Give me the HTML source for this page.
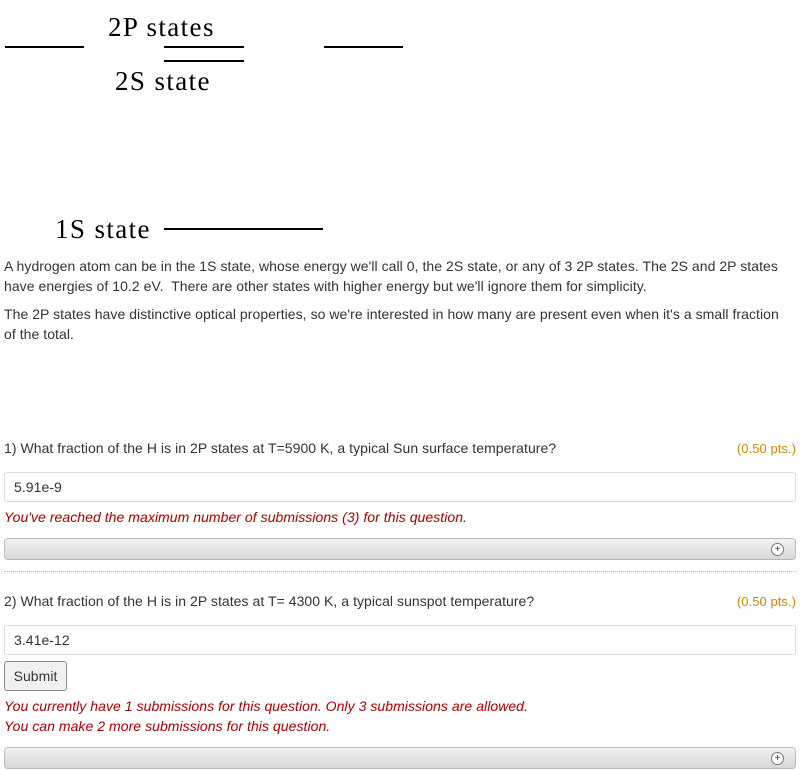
<!DOCTYPE html>
<html><head><meta charset="utf-8"><style>
body{margin:0;width:807px;height:770px;background:#fff;font-family:"Liberation Sans",sans-serif;font-size:14px;letter-spacing:0.05px;color:#333;position:relative;overflow:hidden}
.a{position:absolute;white-space:nowrap}
.ln{position:absolute;height:2px;background:#000}
.serif{font-family:"Liberation Serif",serif;font-size:27px;letter-spacing:1.4px;color:#000}
.inp{position:absolute;left:4px;height:30px;border:1px solid #ddd;border-radius:3px;box-sizing:border-box;width:792px}
.inp span{position:absolute;left:9px;top:6px}
.red{color:#a00;font-style:italic}
.bar{position:absolute;left:4px;width:792px;height:22px;box-sizing:border-box;border:1px solid #bbb;border-radius:4px;background:linear-gradient(#f2f2f2,#d8d8d8)}
.bar i{position:absolute;right:11px;top:4px;width:11px;height:11px;border:1px solid #777;border-radius:50%;background:#fff;font-style:normal;font-size:10px;line-height:11px;text-align:center;color:#333;letter-spacing:0}
.pts{color:#c80;}
</style></head><body>
<div class="ln" style="left:5px;top:46px;width:79px"></div>
<div class="ln" style="left:164px;top:46px;width:80px"></div>
<div class="ln" style="left:164px;top:60px;width:80px"></div>
<div class="ln" style="left:324px;top:46px;width:79px"></div>
<div class="ln" style="left:164px;top:228px;width:159px"></div>
<div class="a serif" style="left:108px;top:12px">2P states</div>
<div class="a serif" style="left:115px;top:66px">2S state</div>
<div class="a serif" style="left:55px;top:214px">1S state</div>
<div class="a" style="left:4px;top:256px;line-height:20px">A hydrogen atom can be in the 1S state, whose energy we'll call 0, the 2S state, or any of 3 2P states. The 2S and 2P states<br>have energies of 10.2 eV.&nbsp; There are other states with higher energy but we'll ignore them for simplicity.</div>
<div class="a" style="left:4px;top:304px;line-height:20px">The 2P states have distinctive optical properties, so we're interested in how many are present even when it's a small fraction<br>of the total.</div>
<div class="a" style="left:4px;top:440px">1) What fraction of the H is in 2P states at T=5900 K, a typical Sun surface temperature?</div>
<div class="a pts" style="right:11px;top:441px;font-size:13px">(0.50 pts.)</div>
<div class="inp" style="top:472px"><span>5.91e-9</span></div>
<div class="a red" style="left:4px;top:509px">You've reached the maximum number of submissions (3) for this question.</div>
<div class="bar" style="top:538px"><i>+</i></div>
<div class="a" style="left:4px;top:571px;width:792px;border-top:1px dotted #bbb"></div>
<div class="a" style="left:4px;top:593px">2) What fraction of the H is in 2P states at T= 4300 K, a typical sunspot temperature?</div>
<div class="a pts" style="right:11px;top:594px;font-size:13px">(0.50 pts.)</div>
<div class="inp" style="top:625px"><span>3.41e-12</span></div>
<div class="a" style="left:4px;top:661px;width:63px;height:30px;box-sizing:border-box;border:1px solid #888;border-radius:3px;background:#f0f0f0;text-align:center;line-height:28px">Submit</div>
<div class="a red" style="left:4px;top:698px">You currently have 1 submissions for this question. Only 3 submissions are allowed.</div>
<div class="a red" style="left:4px;top:718px">You can make 2 more submissions for this question.</div>
<div class="bar" style="top:747px"><i>+</i></div>
</body></html>
